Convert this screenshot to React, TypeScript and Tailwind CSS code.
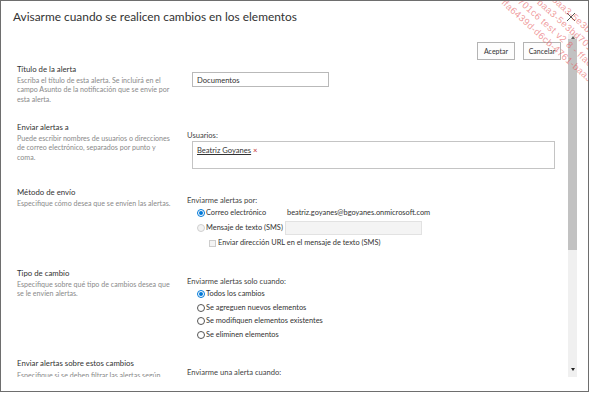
import React from 'react';

const Radio: React.FC<{ checked?: boolean; disabled?: boolean }> = ({ checked, disabled }) => {
    if (checked) {
        return (
            <span className="w-[8px] h-[8px] rounded-full border border-[#0078d7] flex items-center justify-center shrink-0">
                <span className="w-[4px] h-[4px] rounded-full bg-[#0078d7]" />
            </span>
        );
    }
    return (
        <span
            className={`w-[8px] h-[8px] rounded-full border shrink-0 ${disabled ? 'border-[#cfcfcf] bg-[#f3f3f3]' : 'border-[#555]'}`}
        />
    );
};

const Section: React.FC<{
    title: string;
    desc: string;
    height: string;
    children?: React.ReactNode;
}> = ({ title, desc, height, children }) => (
    <div className={`flex ${height}`}>
        <div className="w-[170px] shrink-0 pr-[12px]">
            <div className="text-[7.8px] leading-[10px] text-[#333]">{title}</div>
            <p className="mt-[2px] text-[7.1px] leading-[9.3px] text-[#8a8a8a]">{desc}</p>
        </div>
        <div className="flex-1 pt-[8px] text-[7.6px] leading-[10px] text-[#444]">{children}</div>
    </div>
);

// rotated pink id text in the top right corner
const Watermark = () => (
    <div className="absolute left-[530px] top-[-31px] rotate-[42deg] origin-top-left pointer-events-none select-none">
        <div className="text-[9.5px] leading-[12px] tracking-[0.4px] text-[#e5585c]/60 font-['Liberation_Sans',sans-serif] whitespace-nowrap">
            <div>b-4761-baa3-5e3bd701c6 te</div>
            <div>4761-baa3-5e3bd701c6 test v2 8 - ffa6</div>
            <div>bd701c6 test v2 8 - ffa6439d-d6cb-4761-</div>
            <div>ffa6439d-d6cb-4761-baa3</div>
        </div>
    </div>
);

export default function App() {
    return (
        <div className="w-[590px] h-[393px] bg-white font-['Lato',sans-serif]">
            <div className="relative w-[589px] h-[392px] border border-[#6e6e6e] flex flex-col overflow-hidden bg-white">
                <header className="h-[33px] shrink-0 pl-[12px] pt-[7px]">
                    <h1 className="text-[11.9px] leading-[18px] text-[#333]">
                        Avisarme cuando se realicen cambios en los elementos
                    </h1>
                </header>

                <button className="absolute top-[11px] right-[12px] w-[10px] h-[10px] text-[#444]">
                    <svg viewBox="0 0 10 10" width="10" height="10" stroke="currentColor" strokeWidth="0.9">
                        <path d="M1 1 L9 9 M9 1 L1 9" />
                    </svg>
                </button>

                <div className="flex h-[343px] shrink-0 pr-[11px]">
                    <div className="flex-1 overflow-hidden pl-[16px]">
                        <div className="flex justify-end gap-[8px] pt-[8px] pr-[7px]">
                            <button className="w-[38px] h-[18px] border border-[#b4b4b4] bg-[#fdfdfd] text-[7px] text-[#333]">
                                Aceptar
                            </button>
                            <button className="w-[38px] h-[18px] border border-[#b4b4b4] bg-[#fdfdfd] text-[7px] text-[#333]">
                                Cancelar
                            </button>
                        </div>

                        <div className="mt-[4px]">
                            <Section
                                title="Título de la alerta"
                                desc="Escriba el título de esta alerta. Se incluirá en el campo Asunto de la notificación que se envíe por esta alerta."
                                height="h-[58px]"
                            >
                                <div className="ml-[5px] w-[137px] h-[15px] border border-[#b9b9b9] px-[4px] flex items-center text-[#333]">
                                    Documentos
                                </div>
                            </Section>

                            <Section
                                title="Enviar alertas a"
                                desc="Puede escribir nombres de usuarios o direcciones de correo electrónico, separados por punto y coma."
                                height="h-[65px]"
                            >
                                <div>Usuarios:</div>
                                <div className="mt-[1px] ml-[5px] w-[363px] h-[28px] border border-[#c4c4c4] px-[4px] pt-[3px] text-[#333]">
                                    <span className="underline">Beatriz Goyanes</span>
                                    <span className="ml-[2px] text-[#c0292b]">×</span>
                                </div>
                            </Section>

                            <Section
                                title="Método de envío"
                                desc="Especifique cómo desea que se envíen las alertas."
                                height="h-[81px]"
                            >
                                <div>Enviarme alertas por:</div>
                                <div className="ml-[10px] mt-[3px] flex flex-col gap-[5px] text-[#333] text-[7.4px]">
                                    <div className="flex items-center h-[10px]">
                                        <Radio checked />
                                        <span className="ml-[1px] w-[79px] whitespace-nowrap">Correo electrónico</span>
                                        <span className="ml-[2px]">beatriz.goyanes@bgoyanes.onmicrosoft.com</span>
                                    </div>
                                    <div className="flex items-center h-[10px]">
                                        <Radio disabled />
                                        <span className="ml-[1px] w-[79px] whitespace-nowrap">Mensaje de texto (SMS)</span>
                                        <span className="w-[137px] h-[14px] border border-[#e2e2e2] bg-[#f4f4f4]" />
                                    </div>
                                    <div className="flex items-center h-[10px] ml-[12px]">
                                        <span className="w-[7px] h-[7px] border border-[#cdcdcd] bg-[#f4f4f4]" />
                                        <span className="ml-[2px]">Enviar dirección URL en el mensaje de texto (SMS)</span>
                                    </div>
                                </div>
                            </Section>

                            <Section
                                title="Tipo de cambio"
                                desc="Especifique sobre qué tipo de cambios desea que se le envíen alertas."
                                height="h-[90px]"
                            >
                                <div>Enviarme alertas solo cuando:</div>
                                <div className="ml-[10px] mt-[3px] flex flex-col gap-[3.7px] text-[#333] text-[7.4px]">
                                    <label className="flex items-center h-[10px]">
                                        <Radio checked />
                                        <span className="ml-[1px]">Todos los cambios</span>
                                    </label>
                                    <label className="flex items-center h-[10px]">
                                        <Radio />
                                        <span className="ml-[1px]">Se agreguen nuevos elementos</span>
                                    </label>
                                    <label className="flex items-center h-[10px]">
                                        <Radio />
                                        <span className="ml-[1px]">Se modifiquen elementos existentes</span>
                                    </label>
                                    <label className="flex items-center h-[10px]">
                                        <Radio />
                                        <span className="ml-[1px]">Se eliminen elementos</span>
                                    </label>
                                </div>
                            </Section>

                            <div className="flex">
                                <div className="w-[170px] shrink-0 pr-[12px]">
                                    <div className="text-[7.8px] leading-[10px] text-[#333]">Enviar alertas sobre estos cambios</div>
                                    <p className="mt-[3px] text-[7.1px] leading-[9.3px] text-[#8a8a8a]">
                                        Especifique si se deben filtrar las alertas según criterios específicos.
                                    </p>
                                </div>
                                <div className="flex-1 pt-[9px] text-[7.6px] leading-[10px] text-[#444]">
                                    Enviarme una alerta cuando:
                                </div>
                            </div>
                        </div>
                    </div>

                    <div className="w-[9px] h-full bg-[#f0f0f0] flex flex-col items-center">
                        <div className="h-[5px] flex items-end">
                            <span className="w-0 h-0 border-x-[2.5px] border-x-transparent border-b-[3px] border-b-[#606060]" />
                        </div>
                        <div className="w-full h-[211px] bg-[#c2c2c2]" />
                        <div className="flex-1" />
                        <div className="h-[9px] flex items-start">
                            <span className="w-0 h-0 border-x-[2.5px] border-x-transparent border-t-[3px] border-t-[#222]" />
                        </div>
                    </div>
                </div>

                <Watermark />
            </div>
        </div>
    );
}
